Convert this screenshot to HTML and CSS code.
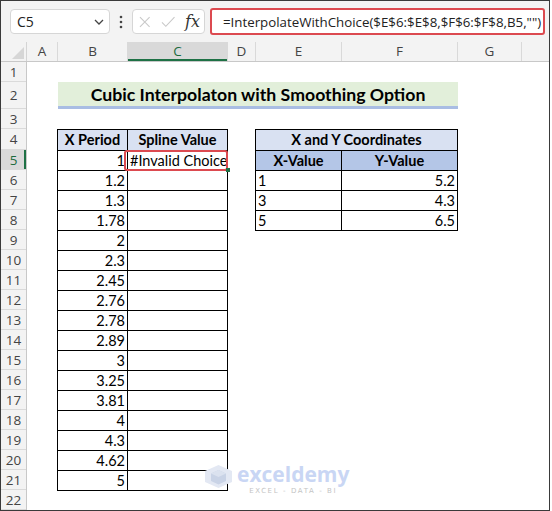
FILE: index.html
```html
<!DOCTYPE html>
<html lang="en">
<head>
  <meta charset="UTF-8" />
  <title>Cubic Interpolation</title>
  <link rel="stylesheet" href="styles.css">
</head>
<body>
  <div class="window">
    <div class="fbar">
      <div class="namebox">
        <span>C5</span>
        <svg class="chev" width="10" height="6" viewBox="0 0 10 6"><path d="M1 1 L5 5 L9 1" fill="none" stroke="#444" stroke-width="1.3"/></svg>
      </div>
      <svg class="dots" width="4" height="14" viewBox="0 0 4 14"><circle cx="2" cy="2" r="1.3" fill="#444"/><circle cx="2" cy="7" r="1.3" fill="#444"/><circle cx="2" cy="12" r="1.3" fill="#444"/></svg>
      <div class="fxbox">
        <svg width="12" height="12" viewBox="0 0 12 12"><path d="M1 1 L11 11 M11 1 L1 11" stroke="#c8c8c8" stroke-width="1.1"/></svg>
        <svg width="15" height="12" viewBox="0 0 15 12"><path d="M1 6.5 L5 10.5 L14 1" fill="none" stroke="#c8c8c8" stroke-width="1.1"/></svg>
        <span class="fx">fx</span>
      </div>
      <div class="formula">=InterpolateWithChoice($E$6:$E$8,$F$6:$F$8,B5,"")</div>
    </div>

    <div class="colhdr">
      <div class="corner"><svg width="12" height="12" viewBox="0 0 12 12"><path d="M12 0 L12 12 L0 12 Z" fill="#d6d6d6"/></svg></div>
      <div class="ch">A</div>
      <div class="ch">B</div>
      <div class="ch sel">C</div>
      <div class="ch">D</div>
      <div class="ch">E</div>
      <div class="ch">F</div>
      <div class="ch">G</div>
      <div class="ch last"></div>
    </div>

    <div class="body">
      <div class="rowhdr">
        <div class="rh">1</div>
        <div class="rh">2</div>
        <div class="rh">3</div>
        <div class="rh">4</div>
        <div class="rh sel">5</div>
        <div class="rh">6</div>
        <div class="rh">7</div>
        <div class="rh">8</div>
        <div class="rh">9</div>
        <div class="rh">10</div>
        <div class="rh">11</div>
        <div class="rh">12</div>
        <div class="rh">13</div>
        <div class="rh">14</div>
        <div class="rh">15</div>
        <div class="rh">16</div>
        <div class="rh">17</div>
        <div class="rh">18</div>
        <div class="rh">19</div>
        <div class="rh">20</div>
        <div class="rh">21</div>
        <div class="rh">22</div>
      </div>

      <div class="cells">
        <div class="title">Cubic Interpolaton with Smoothing Option</div>

        <div class="tbl periods">
          <div class="hd">X Period</div>
          <div class="hd">Spline Value</div>
          <div class="num">1</div>
          <div class="txt active">#Invalid Choice<span class="mark"></span><span class="handle"></span></div>
          <div class="num">1.2</div><div></div>
          <div class="num">1.3</div><div></div>
          <div class="num">1.78</div><div></div>
          <div class="num">2</div><div></div>
          <div class="num">2.3</div><div></div>
          <div class="num">2.45</div><div></div>
          <div class="num">2.76</div><div></div>
          <div class="num">2.78</div><div></div>
          <div class="num">2.89</div><div></div>
          <div class="num">3</div><div></div>
          <div class="num">3.25</div><div></div>
          <div class="num">3.81</div><div></div>
          <div class="num">4</div><div></div>
          <div class="num">4.3</div><div></div>
          <div class="num">4.62</div><div></div>
          <div class="num">5</div><div></div>
        </div>

        <div class="tbl coords">
          <div class="hd wide">X and Y Coordinates</div>
          <div class="sub">X-Value</div>
          <div class="sub">Y-Value</div>
          <div class="txt">1</div><div class="num">5.2</div>
          <div class="txt">3</div><div class="num">4.3</div>
          <div class="txt">5</div><div class="num">6.5</div>
        </div>
      </div>
    </div>

    <div class="watermark">
      <svg width="31" height="25" viewBox="0 0 31 25">
        <path d="M15.5 1 L29 7 L29 18 L15.5 24 L2 18 L2 7 Z" fill="#e3e8f3"/>
        <path d="M15.5 6 L23 9.5 L23 17 L15.5 20.5 L8 17 L8 9.5 Z" fill="#c9d3e6"/>
        <path d="M15.5 6 L23 9.5 L15.5 13 L8 9.5 Z" fill="#dbe2ef"/>
      </svg>
      <div class="wm-text">
        <span class="brand">exceldemy</span>
        <span class="tag">EXCEL - DATA - BI</span>
      </div>
    </div>
  </div>
</body>
</html>
```

FILE: styles.css
```css
body {
  margin: 0;
  background: #fff;
}
.window {
  position: relative;
  width: 548px;
  height: 509px;
  border: 1px solid #3a3a3a;
  overflow: hidden;
  font-family: "Open Sans", sans-serif;
}
.fbar {
  height: 41px;
  background: #f3f3f3;
  display: flex;
  align-items: center;
  padding: 0 4px 0 9px;
}
.namebox {
  flex-shrink: 0;
  width: 100px;
  height: 25px;
  background: #fff;
  border: 1px solid #d6d6d6;
  border-radius: 4px;
  display: flex;
  align-items: center;
  justify-content: space-between;
  padding: 0 5px 0 6px;
  box-sizing: border-box;
  font-size: 14px;
  color: #222;
}
.dots {
  flex-shrink: 0;
  margin: 0 9px;
}
.fxbox {
  flex-shrink: 0;
  width: 73px;
  height: 25px;
  background: #fff;
  border: 1px solid #d6d6d6;
  border-radius: 4px;
  box-sizing: border-box;
  display: flex;
  align-items: center;
  padding: 0 4px 0 6px;
  gap: 10px;
}
.fx {
  font-family: "DejaVu Serif", serif;
  font-style: italic;
  font-size: 16px;
  color: #333;
}
.formula {
  flex: 1;
  min-width: 0;
  overflow: hidden;
  margin-left: 5px;
  height: 27px;
  background: #fff;
  border: 2px solid #dc4a50;
  border-radius: 3px;
  box-sizing: border-box;
  display: flex;
  align-items: center;
  padding-left: 11px;
  font-size: 13.3px;
  color: #222;
  white-space: nowrap;
}
.colhdr {
  display: grid;
  grid-template-columns: 26px 31px 70px 100px 28px 86px 116px 64px 1fr;
  height: 19px;
  background: #f3f3f3;
  border-bottom: 1px solid #c8c8c8;
}
.corner {
  border-right: 1px solid #d4d4d4;
  display: flex;
  align-items: flex-end;
  justify-content: flex-end;
  padding: 0 2px 2px 0;
}
.ch {
  border-right: 1px solid #d9d9d9;
  text-align: center;
  font-size: 13.5px;
  line-height: 19px;
  color: #444;
}
.ch.sel {
  background: #d9d9d9;
  color: #1d6b3e;
  box-shadow: inset 0 -2px 0 #1e7145;
}
.ch.last {
  border-right: none;
}
.body {
  display: flex;
}
.rowhdr, .cells {
  display: grid;
  grid-template-rows: 20px 27px 20px 21px repeat(17, 20px) 20px;
}
.rowhdr {
  width: 26px;
  background: #f3f3f3;
  border-right: 1px solid #c8c8c8;
  box-sizing: border-box;
}
.rh {
  border-bottom: 1px solid #dadada;
  font-size: 13.5px;
  color: #444;
  display: flex;
  align-items: center;
  justify-content: center;
}
.rh.sel {
  background: #d9d9d9;
  color: #1d6b3e;
  box-shadow: inset -2px 0 0 #1e7145;
}
.cells {
  flex: 1;
  grid-template-columns: 31px 70px 100px 28px 86px 116px 64px 1fr;
  font-family: "Lato", sans-serif;
  font-size: 14.5px;
  color: #000;
}
.title {
  grid-column: 2 / 7;
  grid-row: 2;
  background: #e2efda;
  border-bottom: 3px solid #a9bde3;
  font-weight: bold;
  font-size: 17.7px;
  text-align: center;
  line-height: 26px;
}
.tbl {
  display: grid;
  gap: 1px;
  padding: 1px;
  background: #000;
  align-self: start;
  justify-self: start;
  margin-left: -1px;
}
.tbl > div {
  background: #fff;
  padding: 0 2px;
  line-height: 19px;
  white-space: nowrap;
}
.periods {
  grid-column: 2 / 4;
  grid-row: 4 / 22;
  grid-template-columns: 69px 99px;
  grid-template-rows: 20px repeat(17, 19px);
}
.coords {
  grid-column: 5 / 7;
  grid-row: 4 / 9;
  grid-template-columns: 85px 115px;
  grid-template-rows: 20px repeat(4, 19px);
}
.tbl > .hd {
  background: #d9e1f2;
  font-weight: bold;
  text-align: center;
  line-height: 20px;
}
.tbl > .wide {
  grid-column: 1 / 3;
}
.tbl > .sub {
  background: #b4c6e7;
  font-weight: bold;
  text-align: center;
}
.tbl > .num {
  text-align: right;
}
.tbl > .txt {
  text-align: left;
}
.active {
  position: relative;
}
.mark {
  position: absolute;
  left: -4px;
  top: -1px;
  right: -1px;
  bottom: -1px;
  border: 2px solid #dc4a50;
  border-radius: 3px;
}
.handle {
  position: absolute;
  right: -3px;
  bottom: -2px;
  width: 4px;
  height: 4px;
  background: #1e7145;
}
.watermark {
  position: absolute;
  left: 202px;
  top: 463px;
  display: flex;
  align-items: flex-start;
  gap: 3px;
}
.wm-text {
  display: flex;
  flex-direction: column;
  align-items: center;
}
.brand {
  font-family: "Open Sans", sans-serif;
  font-weight: bold;
  font-size: 21px;
  line-height: 21px;
  color: #c9d6f4;
}
.tag {
  font-family: "DejaVu Sans", sans-serif;
  font-size: 7px;
  line-height: 8px;
  letter-spacing: 1.6px;
  color: #c4c4c4;
  margin-top: 2px;
}
```
